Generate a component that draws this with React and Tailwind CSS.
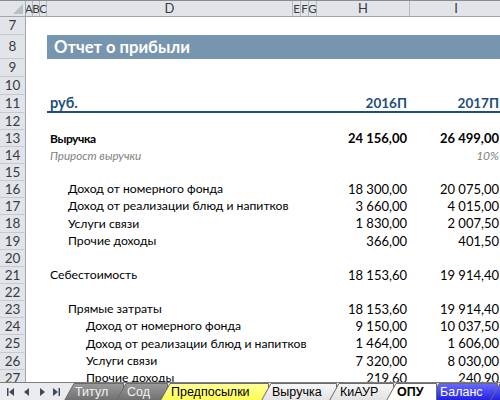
import React from "react";

const FONT = { fontFamily: "Lato, 'Open Sans', sans-serif" };

const rowsH = {
  7: 18, 8: 24, 9: 18, 10: 18, 11: 18, 12: 17,
  13: 17, 14: 17, 15: 17, 16: 17, 17: 17, 18: 18, 19: 17, 20: 17,
  21: 17, 22: 17, 23: 17, 24: 17, 25: 18, 26: 17, 27: 17,
};

const data = {
  13: { d: "Выручка", ind: 0, h: "24 156,00", i: "26 499,00", bold: true },
  14: { d: "Прирост выручки", ind: 0, h: "", i: "10%", italic: true },
  16: { d: "Доход от номерного фонда", ind: 1, h: "18 300,00", i: "20 075,00" },
  17: { d: "Доход от реализации блюд и напитков", ind: 1, h: "3 660,00", i: "4 015,00" },
  18: { d: "Услуги связи", ind: 1, h: "1 830,00", i: "2 007,50" },
  19: { d: "Прочие доходы", ind: 1, h: "366,00", i: "401,50" },
  21: { d: "Себестоимость", ind: 0, h: "18 153,60", i: "19 914,40" },
  23: { d: "Прямые затраты", ind: 1, h: "18 153,60", i: "19 914,40" },
  24: { d: "Доход от номерного фонда", ind: 2, h: "9 150,00", i: "10 037,50" },
  25: { d: "Доход от реализации блюд и напитков", ind: 2, h: "1 464,00", i: "1 606,00" },
  26: { d: "Услуги связи", ind: 2, h: "7 320,00", i: "8 030,00" },
  27: { d: "Прочие доходы", ind: 2, h: "219,60", i: "240,90" },
};

const indCls = ["pl-[3px]", "pl-[21px]", "pl-[39px]"];

function RowHeader({ n, h }) {
  return (
    <div
      className="w-[26px] shrink-0 flex items-center justify-center border-r border-b border-r-[#9ea6b0] border-b-[#c5cad1] bg-[#e1e5ea] text-[13.5px] text-[#3b3b3b]"
      style={{ height: h }}
    >
      {n}
    </div>
  );
}

function Row({ n }) {
  const h = rowsH[n];
  if (n === 8) {
    return (
      <div className="flex">
        <RowHeader n={n} h={h} />
        <div className="w-[21px] shrink-0" />
        <div className="flex-1 bg-[#7895b0] flex items-center pl-[7px] text-white font-bold text-[16.6px]" style={{ height: h }}>
          Отчет о прибыли
        </div>
      </div>
    );
  }
  if (n === 11) {
    return (
      <div className="flex">
        <RowHeader n={n} h={h} />
        <div className="w-[21px] shrink-0" />
        <div className="flex flex-1 border-b-2 border-[#1f4e79] text-[#1f4e79] font-bold" style={{ height: h }}>
          <div className="w-[246px] shrink-0 pl-[3px] flex items-end leading-[17px] text-[14.5px]">руб.</div>
          <div className="w-[24px] shrink-0" />
          <div className="w-[93px] shrink-0 pr-[3px] flex items-end justify-end leading-[16px] text-[13.5px]">2016П</div>
          <div className="w-[92px] shrink-0 pr-[3px] flex items-end justify-end leading-[16px] text-[13.5px] whitespace-nowrap">2017П</div>
        </div>
      </div>
    );
  }
  const r = data[n];
  const base = r
    ? r.bold
      ? "font-bold text-black"
      : r.italic
      ? "italic text-[#7f7f7f]"
      : "text-black"
    : "";
  const lblSize = r
    ? r.bold
      ? "text-[12px] tracking-[-0.4px]"
      : r.italic
      ? "text-[11.6px]"
      : "text-[12.2px]"
    : "";
  return (
    <div className="flex">
      <RowHeader n={n} h={h} />
      <div className="w-[21px] shrink-0" />
      {r && (
        <div className={`flex ${base}`} style={{ height: h }}>
          <div className={`w-[246px] shrink-0 flex items-center whitespace-nowrap ${lblSize} ${indCls[r.ind]}`}>{r.d}</div>
          <div className="w-[24px] shrink-0" />
          <div className="w-[93px] shrink-0 pr-[3px] flex items-center justify-end whitespace-nowrap text-[13px]">{r.h}</div>
          <div className={`w-[92px] shrink-0 pr-[3px] flex items-center justify-end whitespace-nowrap ${r.italic ? "text-[12px]" : "text-[13px]"}`}>{r.i}</div>
        </div>
      )}
    </div>
  );
}

function ColHead({ w, label, last, small }) {
  return (
    <div
      className={`shrink-0 h-full flex items-center justify-center text-[#3b3b3b] ${small ? "text-[11.5px]" : "text-[13px]"} ${last ? "" : "border-r border-[#b3bac3]"}`}
      style={{ width: w }}
    >
      {label}
    </div>
  );
}

function Tab({ id, label, w, bg, text, bold, z, first }) {
  return (
    <div
      className={`relative shrink-0 h-[18px] flex items-center ${first ? "" : "-ml-[8px]"}`}
      style={{ width: w, zIndex: z }}
    >
      <svg className="absolute inset-0" width={w} height="18" viewBox={`0 0 ${w} 18`}>
        <defs>
          <linearGradient id={`g-${id}`} x1="0" y1="0" x2="0" y2="1">
            <stop offset="0" stopColor={bg[0]} />
            <stop offset="1" stopColor={bg[1]} />
          </linearGradient>
        </defs>
        <polygon
          points={`0.5,17.5 10,0.5 ${w - 0.5},0.5 ${w - 0.5},17.5`}
          fill={`url(#g-${id})`}
          stroke="#6b6b6b"
          strokeWidth="1"
        />
      </svg>
      <span
        className={`relative pl-[11px] whitespace-nowrap text-[12.5px] leading-[18px] ${bold ? "font-bold" : ""}`}
        style={{ color: text, fontFamily: "'Liberation Sans', Arial, sans-serif" }}
      >
        {label}
      </span>
    </div>
  );
}

function NavArrows() {
  return (
    <div className="w-[64px] shrink-0 h-full flex items-center pl-[4px]">
      <svg width="60" height="12" viewBox="0 0 60 12">
        <g fill="#3c4a5c">
          <rect x="3" y="2" width="1.5" height="8" />
          <polygon points="5,6 10,2 10,10" />
          <polygon points="20,6 25,2 25,10" />
          <polygon points="36,2 41,6 36,10" />
          <polygon points="49,2 54,6 49,10" />
          <rect x="54.5" y="2" width="1.5" height="8" />
        </g>
      </svg>
    </div>
  );
}

export default function App() {
  const rowNums = [7, 8, 9, 10, 11, 12, 13, 14, 15, 16, 17, 18, 19, 20, 21, 22, 23, 24, 25, 26, 27];
  return (
    <div className="w-[500px] h-[400px] overflow-hidden bg-white flex flex-col relative" style={FONT}>
      <div className="h-[17px] shrink-0 flex bg-[#e1e5ea] border-t border-[#8c8c8c] border-b border-b-[#9ea6b0]">
        <div className="w-[26px] shrink-0 h-full border-r border-[#9ea6b0] relative">
          <svg className="absolute right-[2px] bottom-[2px]" width="10" height="10" viewBox="0 0 10 10">
            <polygon points="10,0 10,10 0,10" fill="#b9bec5" />
          </svg>
        </div>
        <ColHead w={7} label="A" small />
        <ColHead w={7} label="B" small />
        <ColHead w={7} label="C" small />
        <ColHead w={246} label="D" />
        <ColHead w={8} label="E" small />
        <ColHead w={8} label="F" small />
        <ColHead w={8} label="G" small />
        <ColHead w={93} label="H" />
        <ColHead w={92} label="I" last />
      </div>
      <div className="flex-1 overflow-hidden">
        {rowNums.map((n) => (
          <Row key={n} n={n} />
        ))}
      </div>
      <div className="absolute left-0 bottom-0 w-[500px] h-[18px] flex bg-[#e9ebee] border-t border-[#7d7d7d] overflow-hidden">
        <NavArrows />
        <Tab first id="t1" label="Титул" w={60} bg={["#9a9a9a", "#6f6f6f"]} text="#f2f2f2" z={1} />
        <Tab id="t2" label="Сод" w={52} bg={["#9a9a9a", "#6f6f6f"]} text="#f2f2f2" z={2} />
        <Tab id="t3" label="Предпосылки" w={109} bg={["#ffff99", "#ffff55"]} text="#000" z={3} />
        <Tab id="t4" label="Выручка" w={76} bg={["#f7f7f7", "#e2e2e2"]} text="#000" z={4} />
        <Tab id="t5" label="КиАУР" w={65} bg={["#f7f7f7", "#e2e2e2"]} text="#000" z={5} />
        <Tab id="t6" label="ОПУ" w={51} bg={["#ffffff", "#ffffff"]} text="#000" bold z={9} />
        <Tab id="t7" label="Баланс" w={69} bg={["#6a6aff", "#2020e0"]} text="#ffffff" z={7} />
        <Tab id="t8" label="" w={30} bg={["#6a6aff", "#2020e0"]} text="#ffffff" z={8} />
      </div>
    </div>
  );
}
